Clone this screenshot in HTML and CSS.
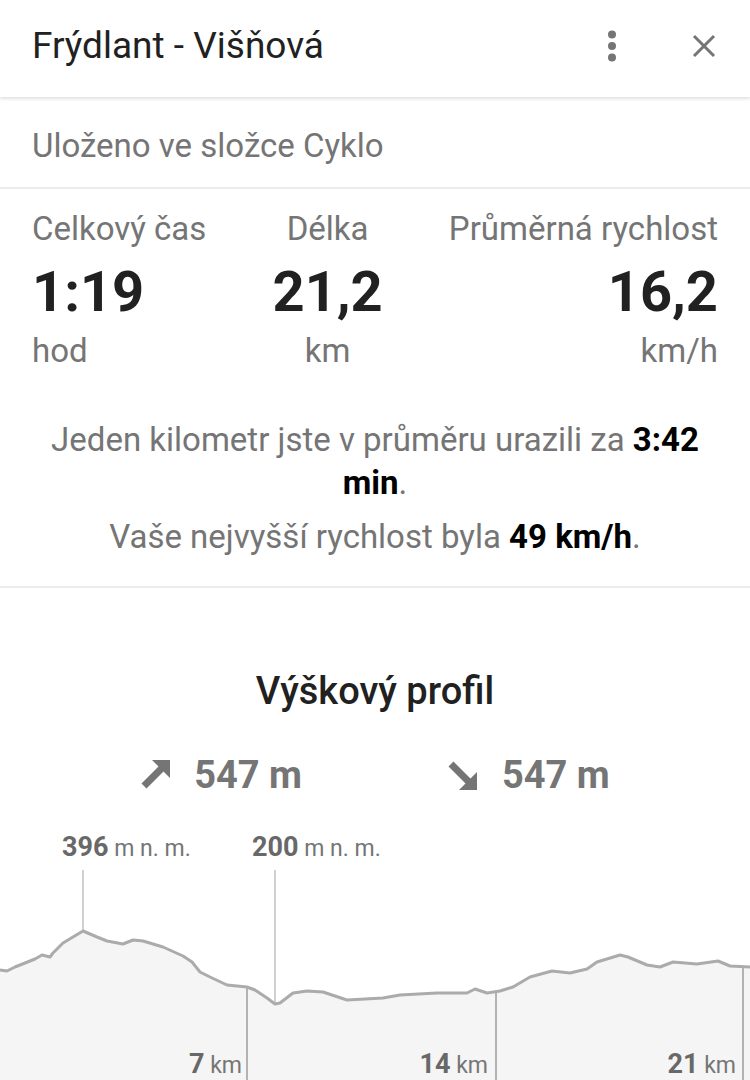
FILE: index.html
```html
<!DOCTYPE html>
<html lang="cs">
<head>
    <meta charset="UTF-8">
    <meta name="viewport" content="width=device-width, initial-scale=1.0">
    <title>Frýdlant - Višňová</title>
    <link rel="stylesheet" href="styles.css">
</head>
<body>
    <div class="sheet">
        <!-- Header -->
        <div class="header">
            <h1 class="title">Frýdlant - Višňová</h1>
            <div class="actions">
                <svg class="icon" width="24" height="36" viewBox="0 0 24 36">
                    <circle cx="12" cy="6.5" r="4" fill="#757575"/>
                    <circle cx="12" cy="18" r="4" fill="#757575"/>
                    <circle cx="12" cy="29.5" r="4" fill="#757575"/>
                </svg>
                <svg class="icon" width="24" height="24" viewBox="0 0 24 24">
                    <path d="M2 2L22 22M22 2L2 22" stroke="#757575" stroke-width="3" fill="none"/>
                </svg>
            </div>
        </div>

        <div class="folder">Uloženo ve složce Cyklo</div>

        <!-- Stats -->
        <div class="stats">
            <div class="stat">
                <div class="stat-label">Celkový čas</div>
                <div class="stat-value">1:19</div>
                <div class="stat-unit">hod</div>
            </div>
            <div class="stat center">
                <div class="stat-label">Délka</div>
                <div class="stat-value">21,2</div>
                <div class="stat-unit">km</div>
            </div>
            <div class="stat right">
                <div class="stat-label">Průměrná rychlost</div>
                <div class="stat-value">16,2</div>
                <div class="stat-unit">km/h</div>
            </div>
        </div>

        <div class="summary">
            <p>Jeden kilometr jste v průměru urazili za <b>3:42</b> <b>min</b>.</p>
            <p>Vaše nejvyšší rychlost byla <b>49 km/h</b>.</p>
        </div>

        <!-- Elevation profile -->
        <div class="profile">
            <h2 class="profile-title">Výškový profil</h2>
            <div class="elevation">
                <div class="elev-item">
                    <svg width="30" height="30" viewBox="0 0 30 30">
                        <path d="M4 26L22 8" stroke="#757575" stroke-width="7" fill="none"/>
                        <polygon points="30,0 12,0 30,18" fill="#757575"/>
                    </svg>
                    <span>547 m</span>
                </div>
                <div class="elev-item">
                    <svg width="32" height="30" viewBox="0 0 30 30">
                        <path d="M4 4L22 22" stroke="#757575" stroke-width="7" fill="none"/>
                        <polygon points="30,30 12,30 30,12" fill="#757575"/>
                    </svg>
                    <span>547 m</span>
                </div>
            </div>
            <svg class="chart" width="750" height="260" viewBox="0 0 750 260">
                <path class="area" d="M0,150 L7,151 L15,147 L35,139 L42,135 L50,137 L53,133 L63,123 L83,111 L97,117 L107,121 L123,124 L133,120 L143,121 L163,127 L183,136 L192,142 L200,152 L210,157 L227,165 L247,167 L255,170 L267,178 L275,184 L280,183 L293,173 L307,171 L323,172 L347,180 L383,178 L400,175 L437,173 L467,173 L475,169 L487,173 L500,171 L513,167 L530,157 L552,151 L570,153 L587,149 L597,142 L620,135 L628,137 L647,145 L660,147 L673,142 L697,144 L718,141 L730,146 L750,147 L750,260 L0,260 Z"/>
                <line class="grid" x1="247" y1="167" x2="247" y2="260"/>
                <line class="grid" x1="496" y1="172" x2="496" y2="260"/>
                <line class="grid" x1="743" y1="147" x2="743" y2="260"/>
                <line class="marker" x1="83" y1="50" x2="83" y2="111"/>
                <line class="marker" x1="275" y1="50" x2="275" y2="184"/>
                <path class="line" d="M0,150 L7,151 L15,147 L35,139 L42,135 L50,137 L53,133 L63,123 L83,111 L97,117 L107,121 L123,124 L133,120 L143,121 L163,127 L183,136 L192,142 L200,152 L210,157 L227,165 L247,167 L255,170 L267,178 L275,184 L280,183 L293,173 L307,171 L323,172 L347,180 L383,178 L400,175 L437,173 L467,173 L475,169 L487,173 L500,171 L513,167 L530,157 L552,151 L570,153 L587,149 L597,142 L620,135 L628,137 L647,145 L660,147 L673,142 L697,144 L718,141 L730,146 L750,147"/>
                <text class="alt" x="62" y="36"><tspan class="num">396</tspan> m n. m.</text>
                <text class="alt" x="252" y="36"><tspan class="num">200</tspan> m n. m.</text>
                <text class="dist" x="242" y="253" text-anchor="end"><tspan class="num">7</tspan> km</text>
                <text class="dist" x="488" y="253" text-anchor="end"><tspan class="num">14</tspan> km</text>
                <text class="dist" x="736" y="253" text-anchor="end"><tspan class="num">21</tspan> km</text>
            </svg>
        </div>
    </div>
</body>
</html>
```

FILE: styles.css
```css
body {
    margin: 0;
    font-family: Roboto, "Noto Sans", sans-serif;
    background-color: #fff;
    color: #212121;
    overflow: hidden;
}

.sheet {
    width: 750px;
    height: 1080px;
    overflow: hidden;
}

.header {
    height: 97px;
    display: flex;
    align-items: center;
    justify-content: space-between;
    padding: 0 34px 6px 32px;
    box-sizing: border-box;
    box-shadow: 0 2px 3px rgba(0, 0, 0, 0.12);
    position: relative;
}

.title {
    margin: 0;
    font-size: 37px;
    font-weight: 400;
    color: #212121;
}

.actions {
    display: flex;
    align-items: center;
    gap: 68px;
}

.icon {
    display: block;
}

.folder {
    padding: 28px 32px 20px;
    font-size: 33px;
    line-height: 42px;
    color: #757575;
    border-bottom: 2px solid #ececec;
}

.stats {
    display: flex;
    justify-content: space-between;
    padding: 20px 32px 0;
}

.stat.center {
    text-align: center;
}

.stat.right {
    text-align: right;
}

.stat-label,
.stat-unit {
    font-size: 33px;
    line-height: 40px;
    color: #757575;
}

.stat-value {
    margin-top: 11px;
    font-size: 56px;
    line-height: 64px;
    font-weight: 700;
    color: #212121;
}

.stat-unit {
    margin-top: 7px;
}

.summary {
    padding: 47px 40px 28px;
    text-align: center;
    font-size: 33px;
    line-height: 43px;
    color: #757575;
    border-bottom: 2px solid #ececec;
}

.summary p {
    margin: 0;
}

.summary p + p {
    margin-top: 11px;
}

.summary b {
    color: #000;
}

.profile {
    padding-top: 81px;
}

.profile-title {
    margin: 0;
    text-align: center;
    font-size: 38px;
    line-height: 44px;
    font-weight: 500;
    color: #212121;
}

.elevation {
    display: flex;
    justify-content: center;
    gap: 144px;
    margin-top: 38px;
    height: 48px;
}

.elev-item {
    display: flex;
    align-items: center;
    gap: 24px;
    font-size: 38px;
    font-weight: 700;
    color: #757575;
}

.chart {
    display: block;
    margin-top: 21px;
}

.area {
    fill: #f5f5f5;
}

.line {
    fill: none;
    stroke: #ababab;
    stroke-width: 3;
    stroke-linejoin: round;
}

.grid {
    stroke: #b3b3b3;
    stroke-width: 2;
}

.marker {
    stroke: #d0d0d0;
    stroke-width: 2;
}

.alt,
.dist {
    font-family: Roboto, sans-serif;
    font-size: 23px;
    fill: #757575;
}

.num {
    font-size: 27px;
    font-weight: 700;
    fill: #686868;
}
```
